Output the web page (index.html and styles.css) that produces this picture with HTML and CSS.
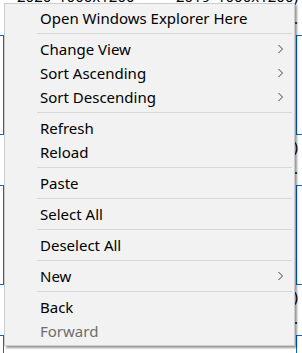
FILE: index.html
```html
<!DOCTYPE html>
<html lang="en">

<head>
    <meta charset="UTF-8">
    <title>Context Menu</title>
    <link rel="stylesheet" href="styles.css">
</head>

<body>

    <!-- Explorer view behind the menu -->
    <div class="desk">
        <div class="caption caption-top">
            <div class="line split"><span>2020_1000x1200</span><span>2019_1000x1200)</span></div>
            <div class="line">Photo.</div>
        </div>
        <div class="thumbs">
            <div class="thumb thumb-left"></div>
            <div class="thumb thumb-right"></div>
        </div>
        <div class="caption">
            <div class="line">1000x1200)</div>
            <div class="line">Photo.</div>
        </div>
        <div class="thumbs">
            <div class="thumb thumb-left"></div>
            <div class="thumb thumb-right"></div>
        </div>
        <div class="caption">
            <div class="line">1000x1200)</div>
            <div class="line">Photo.</div>
        </div>
        <div class="thumbs">
            <div class="thumb thumb-left"></div>
            <div class="thumb thumb-right"></div>
        </div>
    </div>

    <!-- Context menu -->
    <div class="menu">
        <div class="item">Open Windows Explorer Here</div>
        <div class="sep"></div>
        <div class="item">Change View
            <svg class="arrow" width="7" height="10" viewBox="0 0 7 10"><polyline points="1.5,1 5.5,5 1.5,9" /></svg>
        </div>
        <div class="item">Sort Ascending
            <svg class="arrow" width="7" height="10" viewBox="0 0 7 10"><polyline points="1.5,1 5.5,5 1.5,9" /></svg>
        </div>
        <div class="item">Sort Descending
            <svg class="arrow" width="7" height="10" viewBox="0 0 7 10"><polyline points="1.5,1 5.5,5 1.5,9" /></svg>
        </div>
        <div class="sep"></div>
        <div class="item">Refresh</div>
        <div class="item">Reload</div>
        <div class="sep"></div>
        <div class="item">Paste</div>
        <div class="sep"></div>
        <div class="item">Select All</div>
        <div class="sep"></div>
        <div class="item">Deselect All</div>
        <div class="sep"></div>
        <div class="item">New
            <svg class="arrow" width="7" height="10" viewBox="0 0 7 10"><polyline points="1.5,1 5.5,5 1.5,9" /></svg>
        </div>
        <div class="sep"></div>
        <div class="item">Back</div>
        <div class="item disabled">Forward</div>
    </div>

</body>

</html>
```

FILE: styles.css
```css
html,
body {
    margin: 0;
    height: 100%;
    overflow: hidden;
    background: #fff;
}

body {
    font-family: 'Noto Sans', 'Open Sans', sans-serif;
    font-size: 15px;
    color: #000;
}

/* background explorer view */
.desk {
    width: 302px;
}

.caption {
    height: 50px;
}

.caption-top {
    margin-top: -15px;
}

.caption .line {
    height: 22px;
    line-height: 22px;
    text-align: right;
    padding-right: 4px;
    white-space: nowrap;
}

.caption .line.split {
    display: flex;
    justify-content: space-between;
    padding-left: 17px;
}

.thumbs {
    display: flex;
    justify-content: space-between;
    height: 100px;
}

.thumb {
    width: 60px;
    box-sizing: border-box;
    border: 1px solid #0a66c8;
}

.thumb-left {
    margin-left: -56px;
}

.thumb-right {
    margin-right: -54px;
}

/* context menu */
.menu {
    position: absolute;
    left: 4px;
    top: 3px;
    width: 291px;
    box-sizing: border-box;
    padding: 2px 0;
    background: #f2f2f2;
    border: 1px solid #cccccc;
    box-shadow: 2px 2px 2px rgba(0, 0, 0, 0.4);
}

.item {
    display: flex;
    align-items: center;
    justify-content: space-between;
    height: 24px;
    line-height: 24px;
    padding: 0 10px 0 35px;
    white-space: nowrap;
}

.item.disabled {
    color: #6d6d6d;
}

.arrow polyline {
    fill: none;
    stroke: #444;
    stroke-width: 1;
}

.sep {
    height: 1px;
    margin: 3px 2px 3px 32px;
    background: #d7d7d7;
}
```
